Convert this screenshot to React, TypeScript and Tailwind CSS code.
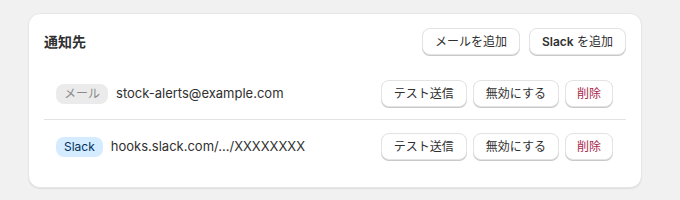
import React from "react";

const btn =
  "h-[27px] px-3 rounded-lg bg-white border border-[#e3e3e3] shadow-[0_1px_0_0_#c8c8c8] text-[12px] leading-none flex items-center";

function Row({
  badge,
  badgeCls,
  value,
}: {
  badge: string;
  badgeCls: string;
  value: string;
}) {
  return (
    <div className="flex items-center justify-between pl-3 pr-[13px] pt-[13px] pb-[12px]">
      <div className="flex items-center gap-2">
        <span className={`h-[20px] px-2 rounded-lg text-[12px] flex items-center ${badgeCls}`}>{badge}</span>
        <span className="text-[13px] text-[#303030]">{value}</span>
      </div>
      <div className="flex items-center gap-[6px]">
        <button className={`${btn} text-[#303030]`}>テスト送信</button>
        <button className={`${btn} text-[#303030]`}>無効にする</button>
        <button className={`${btn} px-[11px] text-[#a8284a]`}>削除</button>
      </div>
    </div>
  );
}

export default function App() {
  return (
    <div
      className="w-[680px] h-[200px] bg-[#f1f1f1] pt-[13px] pl-[28px]"
      style={{ fontFamily: 'Inter, "Noto Sans CJK JP", sans-serif' }}
    >
      <div className="w-[614px] rounded-xl bg-white border border-[#e6e6e6] shadow-[0_1px_1px_0_rgba(0,0,0,0.08)] px-[15px] pt-[14px] pb-[15px]">
        <div className="flex items-center justify-between">
          <h2 className="text-[14px] font-bold text-[#303030]">通知先</h2>
          <div className="flex items-center gap-[9px]">
            <button className={`${btn} text-[#303030]`}>メールを追加</button>
            <button className={`${btn} text-[#303030]`}>
              <span className="font-semibold">Slack</span>&nbsp;を追加
            </button>
          </div>
        </div>
        <div className="mt-[12px]">
          <Row badge="メール" badgeCls="bg-[#ebebeb] text-[#8a8a8a]" value="stock-alerts@example.com" />
          <div className="h-px bg-[#e3e3e3]" />
          <Row badge="Slack" badgeCls="bg-[#d5ebff] text-[#00325c]" value="hooks.slack.com/.../XXXXXXXX" />
        </div>
      </div>
    </div>
  );
}
